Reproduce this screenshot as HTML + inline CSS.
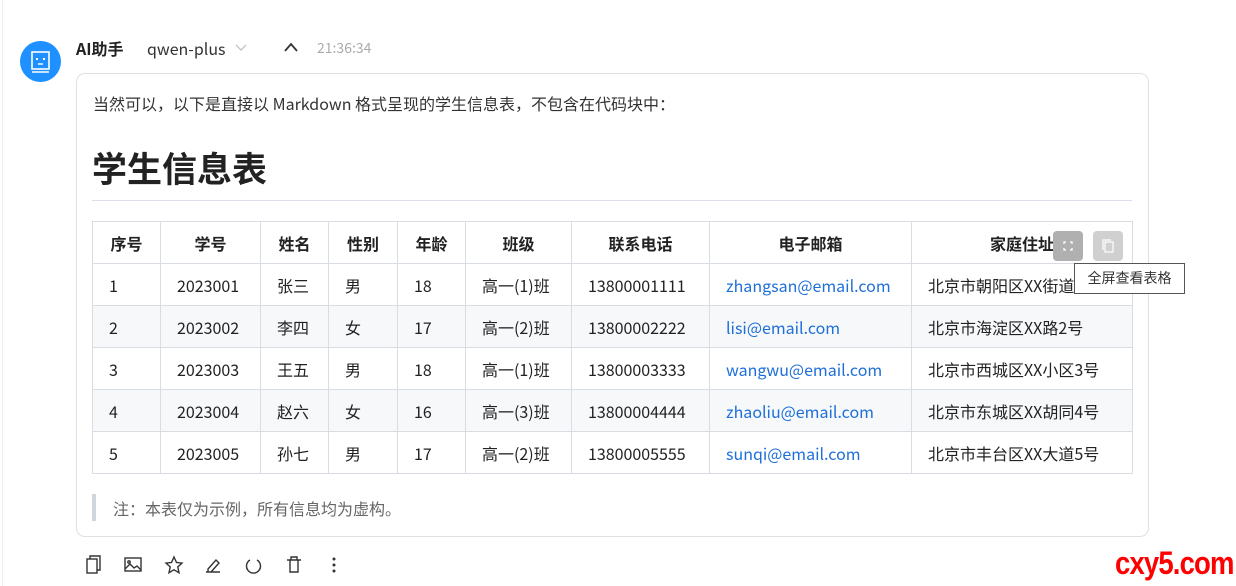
<!DOCTYPE html>
<html><head><meta charset="utf-8"><style>
body{margin:0;width:1236px;height:586px;background:#fff;font-family:"Noto Sans CJK SC","Liberation Sans",sans-serif;color:#222;position:relative;overflow:hidden}
.abs{position:absolute}
.card{position:absolute;left:76px;top:73px;width:1073px;height:464px;border:1px solid #e0e0e0;border-radius:9px;box-sizing:border-box}
table{position:absolute;left:92px;top:221px;border-collapse:collapse;font-size:16px;line-height:20px}
td,th{border:1px solid #d8dce3;height:42px;padding:0 16px;text-align:left;white-space:nowrap;box-sizing:border-box}
th{text-align:center;font-weight:bold}
tr:nth-child(odd) td{background:#f6f8fa}
a{color:#1e6fd9;text-decoration:none}
</style></head><body>
<div class="abs" style="left:2px;top:0;width:1px;height:586px;background:#eee"></div>
<div class="abs" style="left:20px;top:41px;width:41px;height:41px;border-radius:50%;background:#1e90ff">
<svg width="41" height="41" viewBox="0 0 41 41"><rect x="12" y="11" width="17" height="17" fill="none" stroke="#fff" stroke-width="1.6"/><rect x="16" y="17" width="2" height="2" fill="#fff"/><rect x="23" y="17" width="2" height="2" fill="#fff"/><line x1="18" y1="23" x2="23" y2="23" stroke="#fff" stroke-width="1.4"/><line x1="12" y1="31" x2="29" y2="31" stroke="#fff" stroke-width="1.4"/></svg></div>
<div class="abs" style="left:76px;top:36px;font-size:16px;font-weight:bold">AI助手</div>
<div class="abs" style="left:147px;top:36px;font-size:16px;color:#333">qwen-plus</div>
<svg class="abs" style="left:235px;top:44px" width="12" height="8"><path d="M1 1l5 5 5-5" fill="none" stroke="#bbb" stroke-width="1.2"/></svg>
<svg class="abs" style="left:284px;top:42px" width="14" height="10"><path d="M1 9l6-7 6 7" fill="none" stroke="#333" stroke-width="1.8"/></svg>
<div class="abs" style="left:317px;top:38px;font-size:14px;color:#aaa">21:36:34</div>
<div class="card"></div>
<div class="abs" style="left:93px;top:91px;font-size:16px;color:#333">当然可以，以下是直接以 Markdown 格式呈现的学生信息表，不包含在代码块中：</div>
<div class="abs" style="left:92px;top:144px;font-size:35px;font-weight:bold;color:#222;line-height:48px">学生信息表</div>
<div class="abs" style="left:92px;top:200px;width:1040px;height:1px;background:#dde"></div>
<table>
<tr><th style="width:68px">序号</th><th style="width:100px">学号</th><th style="width:68px">姓名</th><th style="width:69px">性别</th><th style="width:68px">年龄</th><th style="width:106px">班级</th><th style="width:138px">联系电话</th><th style="width:202px">电子邮箱</th><th style="width:221px">家庭住址</th></tr>
<tr><td>1</td><td>2023001</td><td>张三</td><td>男</td><td>18</td><td>高一(1)班</td><td>13800001111</td><td><a>zhangsan@email.com</a></td><td>北京市朝阳区XX街道1号</td></tr>
<tr><td>2</td><td>2023002</td><td>李四</td><td>女</td><td>17</td><td>高一(2)班</td><td>13800002222</td><td><a>lisi@email.com</a></td><td>北京市海淀区XX路2号</td></tr>
<tr><td>3</td><td>2023003</td><td>王五</td><td>男</td><td>18</td><td>高一(1)班</td><td>13800003333</td><td><a>wangwu@email.com</a></td><td>北京市西城区XX小区3号</td></tr>
<tr><td>4</td><td>2023004</td><td>赵六</td><td>女</td><td>16</td><td>高一(3)班</td><td>13800004444</td><td><a>zhaoliu@email.com</a></td><td>北京市东城区XX胡同4号</td></tr>
<tr><td>5</td><td>2023005</td><td>孙七</td><td>男</td><td>17</td><td>高一(2)班</td><td>13800005555</td><td><a>sunqi@email.com</a></td><td>北京市丰台区XX大道5号</td></tr>
</table>
<div class="abs" style="left:1053px;top:231px;width:30px;height:30px;border-radius:4px;background:#b0b0b0"><svg width="30" height="30"><path d="M11 13v-2h2M17 11h2v2M19 17v2h-2M13 19h-2v-2" fill="none" stroke="#fff" stroke-width="1.3"/></svg></div>
<div class="abs" style="left:1093px;top:231px;width:30px;height:30px;border-radius:4px;background:#d0d0d0"><svg width="30" height="30"><rect x="12" y="11" width="8" height="10" fill="none" stroke="#fff" stroke-width="1.2"/><path d="M10 19V9h8" fill="none" stroke="#fff" stroke-width="1.2"/></svg></div>
<div class="abs" style="left:1074px;top:263px;width:111px;height:31px;border:1px solid #555;background:#fff;font-size:14px;line-height:29px;text-align:center;box-sizing:border-box;color:#333">全屏查看表格</div>
<div class="abs" style="left:92px;top:494px;width:4px;height:27px;background:#d0d6de"></div>
<div class="abs" style="left:113px;top:496px;font-size:16px;color:#666">注：本表仅为示例，所有信息均为虚构。</div>
<svg class="abs" style="left:84px;top:555px" width="270" height="22" fill="none" stroke="#333" stroke-width="1.4">
<rect x="3" y="4" width="10" height="14"/><path d="M6 4V1h10v14h-3"/>
<rect x="41" y="3" width="16" height="13"/><path d="M41 14l5-5 4 4 3-2 4 4"/><circle cx="45" cy="7" r="1.2"/>
<path d="M90 2l2.5 5.5 5.5.6-4.2 3.8 1.2 5.8L90 14.8 85 17.7l1.2-5.8L82 8.1l5.5-.6z"/>
<path d="M122 17h14M124 14l8-9 3 3-8 9h-3z"/>
<path d="M166 5a7 7 0 1 0 7 0"/>
<path d="M203 5h14M206 5v12h8V5M207 5V2h6v3"/>
<circle cx="250" cy="4" r=".8" fill="#333"/><circle cx="250" cy="10" r=".8" fill="#333"/><circle cx="250" cy="16" r=".8" fill="#333"/>
</svg>
<div class="abs" style="left:1115px;top:545px;font-size:32px;font-weight:bold;color:#f00;font-family:'Liberation Sans',sans-serif;letter-spacing:-1px;transform:scaleX(.86);transform-origin:left">cxy5.com</div>
</body></html>
